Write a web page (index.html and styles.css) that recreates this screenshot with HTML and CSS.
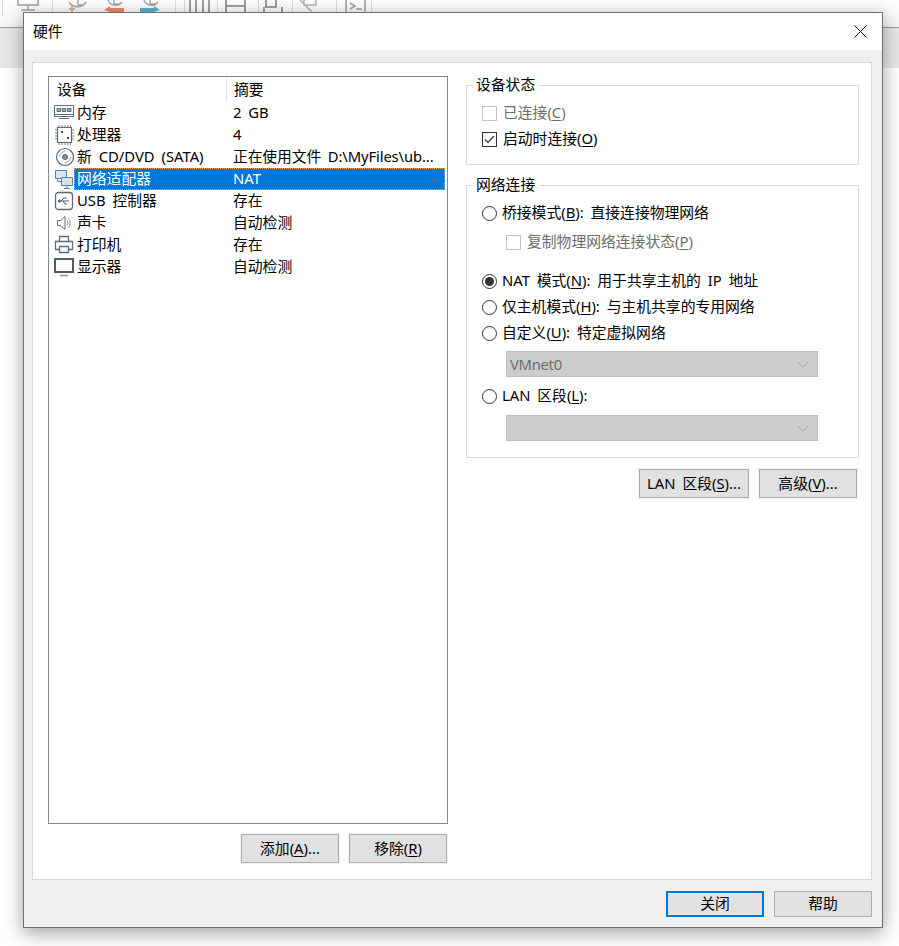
FILE: index.html
```html
<!DOCTYPE html>
<html>
<head>
<meta charset="utf-8">
<title>硬件</title>
<link rel="stylesheet" href="styles.css">
</head>
<body>

<!-- window behind the dialog -->
<div class="toolbar">
  <svg width="899" height="27" fill="none" stroke="#8a9096" stroke-width="1.5">
    <path d="M2.5 0V16M52.5 0V15M175.5 0V15M184.5 0V15M217.5 0V15M258.5 0V15M292.5 0V15M336.5 0V15M371.5 0V15" stroke="#dcdcdc" stroke-width="1"/>
    <path d="M18 0V5H38V0M28 5V10M21 10H35" stroke="#9aa0a6"/>
    <path d="M69 2A10 10 0 0 0 86 2M78 0V5H84" stroke="#a8a8a8"/>
    <path d="M72 6V12M69 9H75" stroke="#d9a07f"/>
    <path d="M108 0A8 8 0 0 0 122 2M114 0V4H120" stroke="#a8a8a8"/>
    <path d="M104 10L110 6V8H124V12H110Z" fill="#e58a63" stroke="none"/>
    <path d="M144 0A8 8 0 0 0 158 2M150 0V4H156" stroke="#a8a8a8"/>
    <path d="M140 8H154V6L160 10L154 12H140Z" fill="#57b4cc" stroke="none"/>
    <path d="M190 0V13H209V0M196 0V13M203 0V13" stroke="#7a8188"/>
    <path d="M226 0V13H245V0M226 6H245" stroke="#7a8188"/>
    <path d="M266 0V7H276V0M264 7V13M282 7V13" stroke="#7a8188"/>
    <path d="M300 0L312 12M304 0V5H316V0" stroke="#b0b4b8"/>
    <path d="M346 0V13M365 0V13M350 3L355 6L350 9M356 9H362" stroke="#9aa0a6"/>
  </svg>
</div>
<div class="band"></div>

<div class="dialog">
  <div class="title">
    <span>硬件</span>
    <svg class="close-x" width="13" height="13" stroke="#111" stroke-width="1"><path d="M0.5 0.5L12.5 12.5M12.5 0.5L0.5 12.5"/></svg>
  </div>

  <div class="main">
    <div class="panel">

      <div class="left">
        <div class="list">
          <div class="list-head">
            <div class="head-dev">设备</div>
            <div class="head-sum">摘要</div>
          </div>

          <div class="row">
            <svg class="icon" width="20" height="20" fill="none" stroke="#5e6a75">
              <path d="M0.5 2.5H19.5V13.5H0.5ZM0.5 11.5H19.5M5 15.5H15" stroke-width="1"/>
              <path d="M3 5.5H6.5V8.5H3ZM8.2 5.5H11.7V8.5H8.2ZM13.4 5.5H17V8.5H13.4Z" fill="#a9b1b8" stroke-width="1"/>
            </svg>
            <div class="cells"><div class="dev">内存</div><div class="sum">2 GB</div></div>
          </div>

          <div class="row">
            <svg class="icon" width="20" height="20" fill="none" stroke="#5e6a75">
              <path d="M3.5 2.5H17.5V17.5H3.5Z" stroke-width="1.2"/>
              <path d="M5 0V2M8 0V2M11 0V2M14 0V2M16.5 0V2M5 18V20M8 18V20M11 18V20M14 18V20M16.5 18V20M1 5H3M1 8H3M1 11H3M1 14H3M18 5H20M18 8H20M18 11H20M18 14H20" stroke="#7d8790"/>
              <path d="M7 6H9V8H7ZM13 12H15V14H13Z" fill="#3e4850" stroke="none"/>
            </svg>
            <div class="cells"><div class="dev">处理器</div><div class="sum">4</div></div>
          </div>

          <div class="row">
            <svg class="icon" width="20" height="20" fill="none" stroke="#5e6a75">
              <circle cx="11" cy="10" r="8.5" stroke-width="1.2"/>
              <circle cx="11" cy="10" r="2.5" fill="#808a93"/>
              <path d="M5.5 10A5.5 5.5 0 0 1 11 4.5M16.5 10A5.5 5.5 0 0 1 11 15.5" stroke="#9aa3ab"/>
            </svg>
            <div class="cells"><div class="dev">新 CD/DVD (SATA)</div><div class="sum long">正在使用文件 D:\MyFiles\ub...</div></div>
          </div>

          <div class="row selected">
            <svg class="icon" width="20" height="20" fill="none" stroke="#5e7f9e">
              <path d="M1.5 1.5H12.5V9.5H1.5Z" fill="#d5e6f5"/>
              <path d="M7.5 8.5H18.5V16.5H7.5Z" fill="#cfe3f4"/>
              <path d="M4 12.5H7M3.5 9.5V12.5M13 16.5V19M10 19.5H16"/>
            </svg>
            <div class="cells"><div class="dev">网络适配器</div><div class="sum">NAT</div></div>
          </div>

          <div class="row">
            <svg class="icon" width="20" height="20" fill="none" stroke="#5e6a75">
              <rect x="1.5" y="1.5" width="17" height="17" rx="3" stroke-width="1.3"/>
              <path d="M4.5 10H15M7 10L10 7H12.5M9 10L11 13H13" stroke="#4e5963"/>
              <path d="M4 10L6 8.5V11.5Z" fill="#4e5963"/>
            </svg>
            <div class="cells"><div class="dev">USB 控制器</div><div class="sum">存在</div></div>
          </div>

          <div class="row">
            <svg class="icon" width="20" height="20" fill="none" stroke="#5e6a75">
              <path d="M3.5 7.5H6.5L11 3.5V16.5L6.5 12.5H3.5Z"/>
              <path d="M13 7.5A4 4 0 0 1 13 12.5M14.5 5.5A7 7 0 0 1 14.5 14.5" stroke="#8a949d"/>
            </svg>
            <div class="cells"><div class="dev">声卡</div><div class="sum">自动检测</div></div>
          </div>

          <div class="row">
            <svg class="icon" width="20" height="20" fill="none" stroke="#5e6a75" stroke-width="1.3">
              <path d="M5.5 6V1.5H14.5V6M5 14.5H1.5V6.5H18.5V14.5H15"/>
              <path d="M5.5 11.5H14.5V17.5H5.5Z"/>
            </svg>
            <div class="cells"><div class="dev">打印机</div><div class="sum">存在</div></div>
          </div>

          <div class="row">
            <svg class="icon" width="20" height="20" fill="none" stroke="#4f5a64">
              <path d="M1 2H19V15H1Z" stroke-width="2"/>
              <path d="M6 18.5H14" stroke-width="1.6" stroke="#8a949d"/>
            </svg>
            <div class="cells"><div class="dev">显示器</div><div class="sum">自动检测</div></div>
          </div>
        </div>

        <div class="list-btns">
          <div class="btn w98"><span>添加(<u>A</u>)...</span></div>
          <div class="btn w98"><span>移除(<u>R</u>)</span></div>
        </div>
      </div>

      <div class="right">
        <fieldset class="group status">
          <legend>设备状态</legend>
          <div class="opt off"><span class="box"></span><span class="label">已连接(<u>C</u>)</span></div>
          <div class="opt">
            <span class="box on"><svg width="13" height="13" fill="none" stroke="#333" stroke-width="1.2"><path d="M2 6.5L5 9.5L11 3"/></svg></span><span class="label">启动时连接(<u>O</u>)</span>
          </div>
        </fieldset>

        <fieldset class="group network">
          <legend>网络连接</legend>
          <div class="opt"><span class="radio"></span><span class="label">桥接模式(<u>B</u>): 直接连接物理网络</span></div>
          <div class="opt off sub-opt"><span class="box"></span><span class="label">复制物理网络连接状态(<u>P</u>)</span></div>
          <div class="opt nat"><span class="radio on"></span><span class="label">NAT 模式(<u>N</u>): 用于共享主机的 IP 地址</span></div>
          <div class="opt"><span class="radio"></span><span class="label">仅主机模式(<u>H</u>): 与主机共享的专用网络</span></div>
          <div class="opt"><span class="radio"></span><span class="label">自定义(<u>U</u>): 特定虚拟网络</span></div>
          <div class="combo first"><span>VMnet0</span><svg width="12" height="7" fill="none" stroke="#a8a8a8"><path d="M1 1L6 6L11 1"/></svg></div>
          <div class="opt lan"><span class="radio"></span><span class="label">LAN 区段(<u>L</u>):</span></div>
          <div class="combo second"><svg width="12" height="7" fill="none" stroke="#a8a8a8"><path d="M1 1L6 6L11 1"/></svg></div>
        </fieldset>

        <div class="net-btns">
          <div class="btn w110"><span>LAN 区段(<u>S</u>)...</span></div>
          <div class="btn w98"><span>高级(<u>V</u>)...</span></div>
        </div>
      </div>

    </div>

    <div class="footer">
      <div class="btn w98 short default"><span>关闭</span></div>
      <div class="btn w98 short"><span>帮助</span></div>
    </div>
  </div>
</div>

</body>
</html>
```
FILE: styles.css
```css
html, body {
  margin: 0;
  height: 100%;
}

body {
  width: 899px;
  height: 946px;
  overflow: hidden;
  background: #fff;
  color: #000;
  font-family: "Noto Sans", "Noto Sans CJK SC", sans-serif;
  font-size: 14.8px;
  line-height: 20px;
  word-spacing: 3px;
}

u {
  text-underline-offset: 2px;
}

/* Window behind the dialog */
.toolbar {
  height: 27px;
  background: linear-gradient(#fff, #f6f6f6);
  border-bottom: 1px solid #999;
}

.toolbar svg {
  display: block;
}

.band {
  height: 40px;
  background: #e8e8e8;
}

/* Dialog */
.dialog {
  position: absolute;
  left: 23px;
  top: 12px;
  width: 858px;
  height: 914px;
  border: 1px solid #6f6f6f;
  display: flex;
  flex-direction: column;
  background: #efefef;
  box-shadow: 0 5px 18px rgba(0, 0, 0, 0.38);
}

.title {
  height: 37px;
  flex: none;
  box-sizing: border-box;
  display: flex;
  align-items: center;
  justify-content: space-between;
  padding: 0 15px 1px 9px;
  background: #fff;
}

.close-x {
  display: block;
}

.main {
  flex: 1;
  display: flex;
  flex-direction: column;
  padding: 12px 10px 10px 8px;
}

.panel {
  flex: 1;
  display: grid;
  grid-template-columns: 400px 393px;
  column-gap: 18px;
  padding: 12px 12px 16px 15px;
  background: #fff;
  border: 1px solid #d9d9d9;
}

.footer {
  margin-top: 11px;
  display: flex;
  justify-content: flex-end;
  gap: 10px;
}

/* Device list */
.left {
  margin-top: 1px;
  display: flex;
  flex-direction: column;
}

.list {
  flex: 1;
  border: 1px solid #828790;
  background: #fff;
}

.list-head {
  display: flex;
  height: 25px;
  align-items: flex-start;
}

.head-dev {
  width: 178px;
  height: 24px;
  padding: 1px 0 0 8px;
  box-sizing: border-box;
  border-right: 1px solid #e3e3e3;
  margin-top: 1px;
}

.head-sum {
  padding: 2px 0 0 7px;
}

.row {
  height: 22px;
  display: flex;
  align-items: center;
  padding: 0 2px 0 5px;
}

.icon {
  width: 20px;
  height: 20px;
  flex: none;
}

.cells {
  flex: 1;
  height: 22px;
  box-sizing: border-box;
  padding-bottom: 2px;
  display: flex;
  align-items: center;
  white-space: nowrap;
  overflow: hidden;
}

.dev {
  width: 153px;
  padding-left: 3px;
  flex: none;
}

.sum {
  padding-left: 3px;
}

.long {
  letter-spacing: -0.12px;
}

.selected .cells {
  background: #0078d7;
  color: #fff;
  outline: 1px dotted #f0a050;
  outline-offset: -1px;
}

.list-btns {
  margin: 10px 1px 0 0;
  display: flex;
  justify-content: flex-end;
  gap: 10px;
}

/* Buttons */
.btn {
  height: 29px;
  box-sizing: border-box;
  padding-bottom: 2px;
  display: flex;
  align-items: center;
  justify-content: center;
  white-space: pre;
  background: #e1e1e1;
  border: 1px solid #adadad;
  box-shadow: 0 0 0 1px #f2f2f2;
}

.w98 {
  width: 98px;
}

.w110 {
  width: 110px;
}

.short {
  height: 26px;
}

.default {
  border: 2px solid #0078d7;
}

/* Right side groups */
.group {
  margin: 0;
  min-width: 0;
  padding: 5px 15px 12px 15px;
  border: 1px solid #dcdcdc;
}

.group legend {
  margin-left: -10px;
  padding: 0 4px;
  height: 20px;
  line-height: 18px;
}

.network {
  margin-top: 10px;
  padding-bottom: 16px;
}

.opt {
  height: 26px;
  display: flex;
  align-items: center;
  white-space: pre;
}

.label {
  margin-top: -2px;
}

.off {
  color: #6d6d6d;
}

.sub-opt {
  margin: 3px 0 0 24px;
}

.nat {
  margin-top: 13px;
}

.lan {
  margin-top: 6px;
}

.box {
  width: 15px;
  height: 15px;
  flex: none;
  box-sizing: border-box;
  margin-right: 6px;
  border: 1px solid #333;
  background: #fff;
  display: flex;
  align-items: center;
  justify-content: center;
}

.off .box {
  border-color: #c4c4c4;
}

.radio {
  width: 15px;
  height: 15px;
  flex: none;
  box-sizing: border-box;
  margin-right: 5px;
  border: 1px solid #333;
  border-radius: 50%;
  background: #fff;
  display: flex;
  align-items: center;
  justify-content: center;
}

.radio.on::after {
  content: "";
  width: 9px;
  height: 9px;
  border-radius: 50%;
  background: #333;
}

.combo {
  width: 312px;
  height: 26px;
  margin-left: 24px;
  box-sizing: border-box;
  padding: 0 8px 0 3px;
  display: flex;
  align-items: center;
  justify-content: space-between;
  background: #ccc;
  border: 1px solid #bfbfbf;
  color: #6d6d6d;
  letter-spacing: -0.3px;
}

.combo.first {
  margin-top: 5px;
}

.combo.second {
  margin-top: 6px;
  justify-content: flex-end;
}

.net-btns {
  margin: 11px 2px 0 0;
  display: flex;
  justify-content: flex-end;
  gap: 10px;
}
```
